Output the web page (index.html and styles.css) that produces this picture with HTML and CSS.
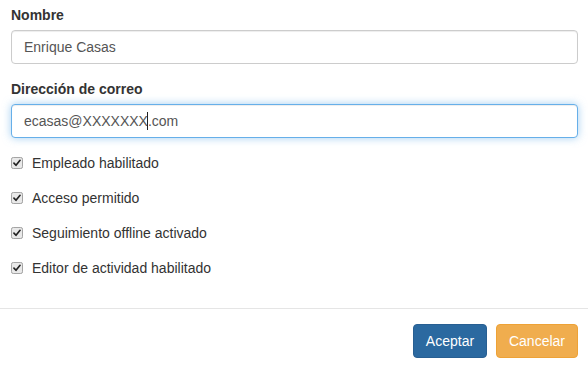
FILE: index.html
```html
<!DOCTYPE html>
<html lang="es">
<head>
    <meta charset="UTF-8">
    <title>Editar empleado</title>
    <link rel="stylesheet" href="styles.css">
</head>
<body>
    <div class="modal-body">
        <form id="employee-form">
            <div class="form-group">
                <label class="field-label" for="nombre">Nombre</label>
                <input class="form-control" type="text" id="nombre" value="Enrique Casas">
            </div>
            <div class="form-group">
                <label class="field-label" for="correo">Dirección de correo</label>
                <div class="input-wrap">
                    <input class="form-control focused" type="text" id="correo" value="ecasas@XXXXXXX.com">
                    <span class="caret"></span>
                </div>
            </div>
            <div class="form-group checkbox">
                <label><input type="checkbox" checked><svg class="tick" viewBox="0 0 13 13"><rect x="0.5" y="0.5" width="12" height="12" rx="2"/><path d="M3.2 6.6 L5.4 9 L9.8 3.6"/></svg>Empleado habilitado</label>
            </div>
            <div class="form-group checkbox">
                <label><input type="checkbox" checked><svg class="tick" viewBox="0 0 13 13"><rect x="0.5" y="0.5" width="12" height="12" rx="2"/><path d="M3.2 6.6 L5.4 9 L9.8 3.6"/></svg>Acceso permitido</label>
            </div>
            <div class="form-group checkbox">
                <label><input type="checkbox" checked><svg class="tick" viewBox="0 0 13 13"><rect x="0.5" y="0.5" width="12" height="12" rx="2"/><path d="M3.2 6.6 L5.4 9 L9.8 3.6"/></svg>Seguimiento offline activado</label>
            </div>
            <div class="form-group checkbox">
                <label><input type="checkbox" checked><svg class="tick" viewBox="0 0 13 13"><rect x="0.5" y="0.5" width="12" height="12" rx="2"/><path d="M3.2 6.6 L5.4 9 L9.8 3.6"/></svg>Editor de actividad habilitado</label>
            </div>
        </form>
    </div>
    <div class="modal-footer">
        <button type="submit" form="employee-form" class="btn btn-primary">Aceptar</button>
        <button type="button" class="btn btn-warning">Cancelar</button>
    </div>
</body>
</html>
```

FILE: styles.css
```css
* { box-sizing: border-box; }
body { margin: 0; font-family: "Liberation Sans", Arial, sans-serif; font-size: 14px; line-height: 20px; color: #333; background: #fff; }

.modal-body { padding: 5px 10px 15px 11px; }
.form-group { margin-bottom: 15px; }
.field-label { display: block; margin-bottom: 5px; font-weight: bold; }

.form-control { display: block; width: 100%; height: 34px; padding: 6px 12px; font: inherit; color: #555; background: #fff; border: 1px solid #ccc; border-radius: 4px; box-shadow: inset 0 1px 1px rgba(0,0,0,.075); outline: none; }
.form-control.focused { border-color: #66afe9; box-shadow: inset 0 1px 1px rgba(0,0,0,.075), 0 0 8px rgba(102,175,233,.6); }

/* caret drawn over the dot, as in a focused field */
.input-wrap { position: relative; }
.caret { position: absolute; left: 136px; top: 8px; width: 2px; height: 18px; background: #fff; border-left: 1px solid #222; }

.checkbox label { display: flex; align-items: center; min-height: 20px; cursor: pointer; }
.checkbox input { display: none; }
.tick { width: 12px; height: 12px; margin: 0 9px 0 0; flex: none; }
.tick rect { fill: #e9e9e9; stroke: #9a9a9a; stroke-width: 1; }
.tick path { fill: none; stroke: #222; stroke-width: 1.8; stroke-linecap: round; stroke-linejoin: round; }

.modal-footer { padding: 15px 10px 15px; border-top: 1px solid #e5e5e5; text-align: right; }
.btn { display: inline-block; height: 34px; padding: 6px 12px; font: inherit; line-height: 20px; color: #fff; border: 1px solid transparent; border-radius: 4px; cursor: pointer; }
.btn + .btn { margin-left: 5px; }
.btn-primary { background: #2b69a0; border-color: #285f92; }
.btn-warning { background: #f0ad4e; border-color: #eea236; }
```
